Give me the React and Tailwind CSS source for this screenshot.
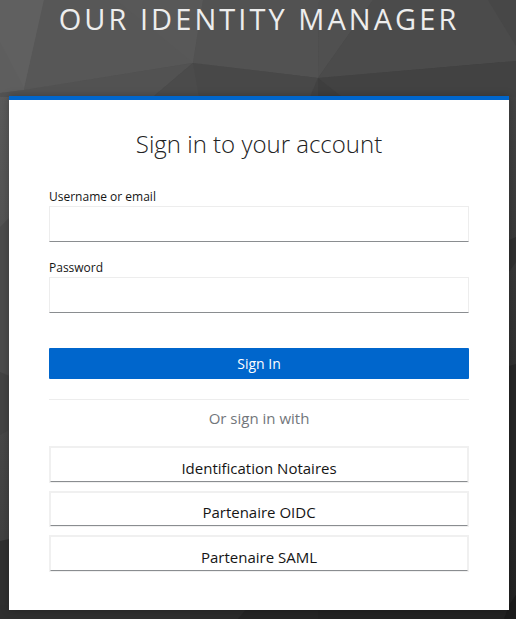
function Backdrop() {
  return (
    <svg className="absolute inset-0 h-full w-full" viewBox="0 0 516 619" preserveAspectRatio="none" aria-hidden="true">
      <defs>
        <linearGradient id="base" x1="0" y1="0" x2="0.75" y2="1">
          <stop offset="0" stopColor="#5d5d5d" />
          <stop offset="0.4" stopColor="#464646" />
          <stop offset="1" stopColor="#202020" />
        </linearGradient>
        <linearGradient id="left" x1="0" y1="0" x2="0" y2="1">
          <stop offset="0" stopColor="#5b5b5b" />
          <stop offset="1" stopColor="#3c3c3c" />
        </linearGradient>
        <linearGradient id="right" x1="0" y1="0" x2="0" y2="1">
          <stop offset="0" stopColor="#464646" />
          <stop offset="0.55" stopColor="#303030" />
          <stop offset="1" stopColor="#222222" />
        </linearGradient>
      </defs>
      <path fill="url(#base)" d="M0 0H516V619H0Z" />
      <path fill="url(#left)" d="M0 93L25 89V619H0Z" />
      <path fill="url(#right)" d="M500 60H516V619H500Z" />
      <path fill="#5e5e5e" d="M0 0H44L24 90L0 93Z" />
      <path fill="#606060" d="M0 0H44L24 88L0 42Z" />
      <path fill="#575757" d="M44 0H203L193 63L24 90Z" />
      <path fill="#585858" d="M116 0H203L193 63Z" />
      <path fill="#525252" d="M24 90L193 63L153 97H0V93Z" />
      <path fill="#525252" d="M203 0H319L318 78L193 63Z" />
      <path fill="#505050" d="M319 0H373L318 78Z" />
      <path fill="#4b4b4b" d="M373 0H516V61L318 78Z" />
      <path fill="#474747" d="M488 0H516V46Z" />
      <path fill="#484848" d="M193 63L318 78L310 97H153Z" />
      <path fill="#4b4b4b" d="M193 63L153 97H199Z" />
      <path fill="#424242" d="M318 78L516 61V97H310Z" />
      <path fill="#3e3e3e" d="M318 78L342 97H318Z" />
      <path fill="#4c4c4c" d="M0 227L9 218V375L0 372Z" />
      <path fill="#434343" d="M0 372L9 376V430L0 435Z" />
      <path fill="#303030" d="M0 541L9 539V605H0Z" />
      <path fill="#303030" d="M509 240L516 237V262L509 272Z" />
      <path fill="#262626" d="M509 366L516 364V520L509 505Z" />
      <path fill="#2f2f2f" d="M0 605H190V619H0Z" />
      <path fill="#2a2a2a" d="M190 605H250L238 619H190Z" />
      <path fill="#242424" d="M250 605H320L318 619H238Z" />
      <path fill="#222222" d="M318 605H509L504 619H318Z" />
      <path fill="#1b1b1b" d="M509 605L516 595V619H504Z" />
    </svg>
  );
}

function Field({ id, label, type }) {
  return (
    <div>
      <label htmlFor={id} className="block h-[18px] text-xs leading-[18px] text-[#151515]">
        {label}
      </label>
      <input
        id={id}
        type={type}
        className="block h-9 w-full border border-[#ededed] border-b-[#8a8d90] bg-white px-2 text-base outline-none"
      />
    </div>
  );
}

function Provider({ label, size }) {
  return (
    <a href="#" className={`block border border-[#f0f0f0] ${size}`}>
      <span className="flex h-full items-start justify-center border border-[#f0f0f0] border-b-[#8a8d90] text-[15px] leading-[22px] text-[#151515]">
        {label}
      </span>
    </a>
  );
}

export default function App() {
  return (
    <div className="relative h-[619px] w-full overflow-hidden bg-[#333] font-['Open_Sans','Noto_Sans',sans-serif]">
      <Backdrop />
      <div className="relative">
        <header className="h-24 pt-px pl-0.5 text-center text-[29px] leading-[36px] tracking-[3.05px] whitespace-nowrap text-[#ededed] uppercase">
          Our Identity Manager
        </header>
        <main className="ml-[9px] h-[514px] w-[500px] border-t-4 border-[#0066cc] bg-white px-10 shadow-[0_0_8px_rgba(0,0,0,0.25)]">
          <h1 className="h-[88px] pt-[26px] text-center text-2xl leading-[36px] font-light text-[#222]">
            Sign in to your account
          </h1>
          <form className="flex flex-col gap-[17px]" onSubmit={(e) => e.preventDefault()}>
            <Field id="username" label="Username or email" type="text" />
            <Field id="password" label="Password" type="password" />
            <button className="mt-[18px] h-[31px] rounded-[1px] bg-[#0066cc] text-sm text-white">Sign In</button>
          </form>
          <section className="mt-5 border-t border-[#ededed]">
            <h2 className="h-[46px] pt-[7px] text-center text-[15px] leading-[22px] text-[#72767b]">Or sign in with</h2>
            <div className="flex flex-col gap-2">
              <Provider label="Identification Notaires" size="h-[37px] *:pt-[9px]" />
              <Provider label="Partenaire OIDC" size="h-9 *:pt-2" />
              <Provider label="Partenaire SAML" size="h-[37px] *:pt-[9px]" />
            </div>
          </section>
        </main>
      </div>
    </div>
  );
}
